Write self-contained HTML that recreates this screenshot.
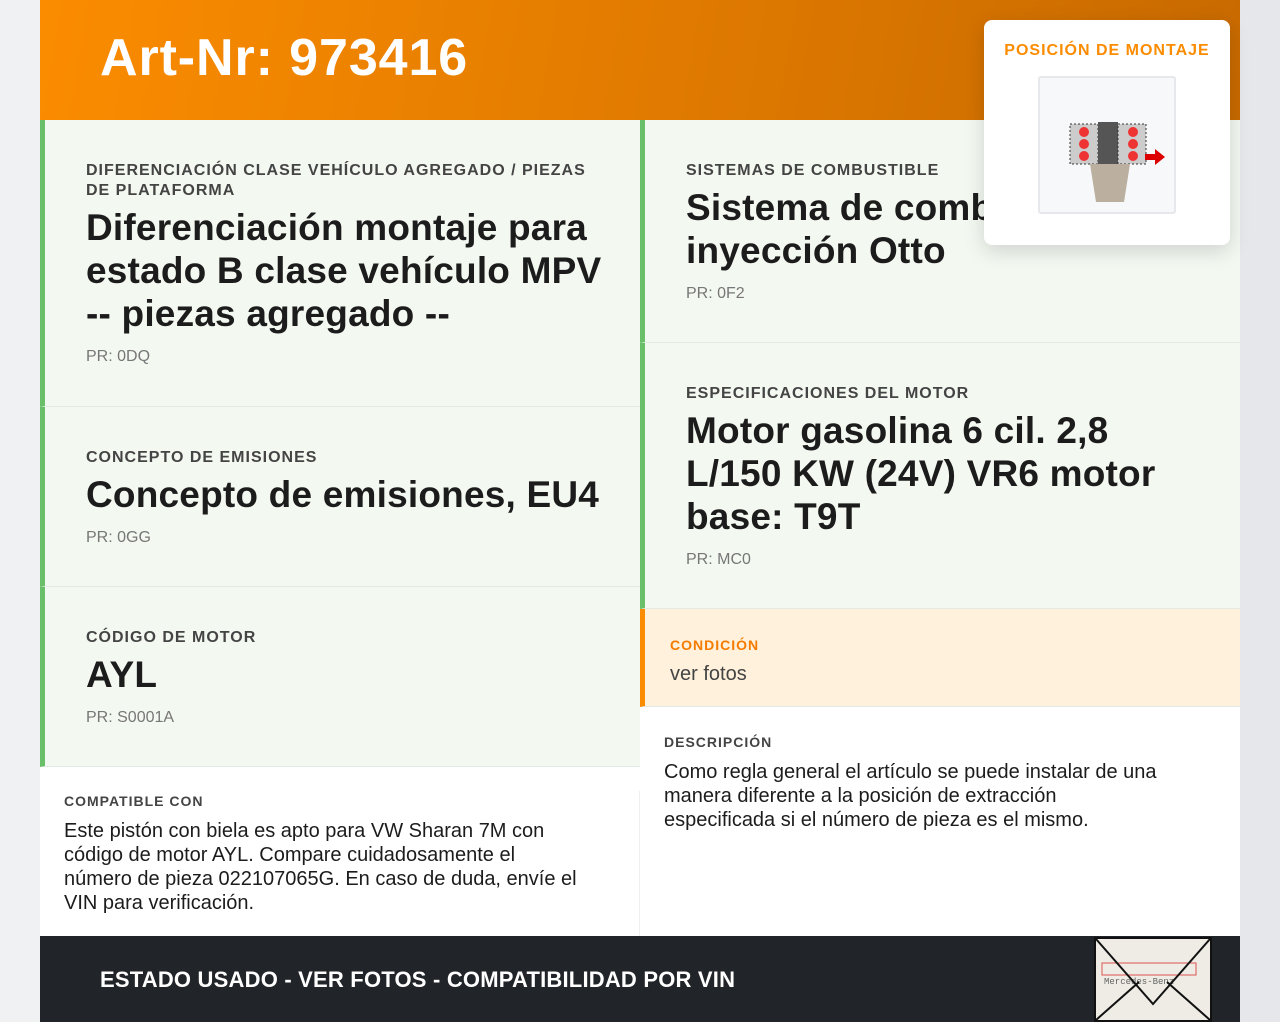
<!DOCTYPE html>
<html><head><meta charset="utf-8"><style>
*{box-sizing:border-box;margin:0;padding:0}
body{width:1280px;height:1022px;background:linear-gradient(90deg,#f0f1f3,#e6e7ea);font-family:"Liberation Sans",sans-serif;position:relative;overflow:hidden}
.wrap{position:absolute;left:40px;top:0;width:1200px;height:1022px;background:#fff}
.hdr{position:absolute;left:0;top:0;width:1200px;height:120px;background:linear-gradient(100deg,#fb8c00,#c86a00)}
.hdr h1{position:absolute;left:60px;top:28px;font-size:52px;letter-spacing:0.9px;color:#fff;font-weight:bold}
.card{position:absolute;background:#f3f8f1;border-left:5px solid #6abf69;border-bottom:1px solid #e3eae1;padding:41px 30px 0 41px}
.lab{font-size:16px;letter-spacing:1px;color:#444;font-weight:bold;text-transform:uppercase;line-height:20px}
.val{font-size:37px;letter-spacing:0.2px;font-weight:bold;color:#1c1c1c;line-height:43px;margin-top:5px}
.pr{font-size:16px;color:#777;margin-top:13px}
.txt{position:absolute;padding:0 24px}
.txt .lab{font-size:14px;color:#444}
.txt p{font-size:20px;color:#1c1c1c;line-height:24px;margin-top:8px;width:515px}
.foot{position:absolute;left:0;top:936px;width:1200px;height:86px;background:#212428}
.foot span{position:absolute;left:60px;top:31px;color:#fff;font-size:22px;letter-spacing:0.2px;font-weight:bold}
.pop{position:absolute;left:984px;top:20px;width:246px;height:225px;background:#fff;border-radius:8px;box-shadow:0 6px 20px rgba(0,0,0,.15)}
</style></head><body>
<div class="wrap">
<div class="hdr"><h1>Art-Nr: 973416</h1></div>
<div class="card" style="left:0;top:120px;width:600px;height:287px"><div class="lab">Diferenciación clase vehículo agregado / piezas de plataforma</div><div class="val">Diferenciación montaje para estado B clase vehículo MPV -- piezas agregado --</div><div class="pr">PR: 0DQ</div></div>
<div class="card" style="left:0;top:407px;width:600px;height:180px"><div class="lab">Concepto de emisiones</div><div class="val">Concepto de emisiones, EU4</div><div class="pr">PR: 0GG</div></div>
<div class="card" style="left:0;top:587px;width:600px;height:180px"><div class="lab">Código de motor</div><div class="val">AYL</div><div class="pr">PR: S0001A</div></div>
<div class="card" style="left:600px;top:120px;width:600px;height:223px"><div class="lab">Sistemas de combustible</div><div class="val">Sistema de combustible inyección Otto</div><div class="pr">PR: 0F2</div></div>
<div class="card" style="left:600px;top:343px;width:600px;height:266px"><div class="lab">Especificaciones del motor</div><div class="val">Motor gasolina 6 cil. 2,8 L/150 KW (24V) VR6 motor base: T9T</div><div class="pr">PR: MC0</div></div>
<div class="card" style="left:600px;top:609px;width:600px;height:98px;background:#fff1dc;border-left-color:#fb8c00;padding:26px 0 0 25px"><div class="lab" style="color:#f57c00;font-size:14px">Condición</div><div style="font-size:20px;color:#444;margin-top:8px">ver fotos</div></div>
<div class="txt" style="left:0;top:791px;width:600px;border-right:1px solid #eee;height:145px"><div class="lab">Compatible con</div><p>Este pistón con biela es apto para VW Sharan 7M con código de motor AYL. Compare cuidadosamente el número de pieza 022107065G. En caso de duda, envíe el VIN para verificación.</p></div>
<div class="txt" style="left:600px;top:732px;width:600px"><div class="lab">Descripción</div><p style="width:500px">Como regla general el artículo se puede instalar de una manera diferente a la posición de extracción especificada si el número de pieza es el mismo.</p></div>
<div class="foot"><span>ESTADO USADO - VER FOTOS - COMPATIBILIDAD POR VIN</span>
<svg style="position:absolute;left:1054px;top:1px" width="118" height="85" viewBox="0 0 118 85"><rect x="1" y="1" width="116" height="83" fill="#eeece4" stroke="#111" stroke-width="2"/><rect x="8" y="26" width="94" height="12" fill="none" stroke="#d55"/><text x="10" y="47" font-size="9" fill="#666" font-family="Liberation Mono">Mercedes-Benz</text><path d="M2 2L59 67L116 2M2 83L45 45M116 83L73 45" stroke="#111" stroke-width="2" fill="none"/></svg></div>
</div>
<div class="pop"><div style="text-align:center;margin-top:22px;font-size:16px;font-weight:bold;color:#fb8c00;letter-spacing:1px">POSICIÓN DE MONTAJE</div>
<div style="position:absolute;left:54px;top:56px;width:138px;height:138px;background:#f7f8fa;border:2px solid #e6e8ec;border-radius:3px">
<svg width="134" height="134" viewBox="0 0 134 134"><rect x="30" y="46" width="28" height="40" fill="#ccc" stroke="#333" stroke-dasharray="2 2"/><rect x="58" y="44" width="20" height="42" fill="#555"/><rect x="78" y="46" width="28" height="40" fill="#ccc" stroke="#333" stroke-dasharray="2 2"/><path d="M50 86h40l-6 38h-28z" fill="#bbb0a0"/><path d="M105 76h10v-5l10 8-10 8v-5h-10z" fill="#d00"/><circle cx="44" cy="54" r="5" fill="#e33"/><circle cx="44" cy="66" r="5" fill="#e33"/><circle cx="44" cy="78" r="5" fill="#e33"/><circle cx="93" cy="54" r="5" fill="#e33"/><circle cx="93" cy="66" r="5" fill="#e33"/><circle cx="93" cy="78" r="5" fill="#e33"/></svg></div></div>
</body></html>
